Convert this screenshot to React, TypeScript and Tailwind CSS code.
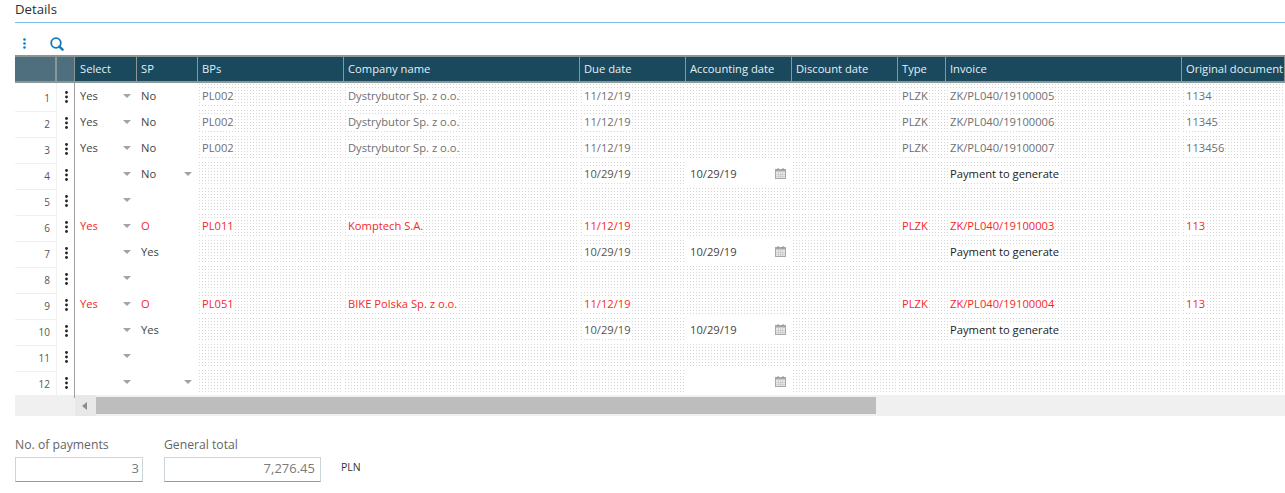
const GRID = 'grid grid-cols-[42px_18px_62px_61px_146px_236px_106px_106px_106px_48px_236px_103px]';
const DOTTED =
  'bg-[linear-gradient(to_right,transparent_1px,white_1px),linear-gradient(to_bottom,transparent_1px,white_1px)] bg-[size:3px_3px] bg-[#d6d6d6]';

const HEADERS = ['Select', 'SP', 'BPs', 'Company name', 'Due date', 'Accounting date', 'Discount date', 'Type', 'Invoice', 'Original document'];

interface Row {
  select?: string;
  sp?: string;
  spArrow?: boolean;
  bp?: string;
  company?: string;
  due?: string;
  acc?: string;
  accEdit?: boolean;
  type?: string;
  invoice?: string;
  doc?: string;
  red?: boolean;
  editable?: boolean;
}

const rows: Row[] = [
  { select: 'Yes', sp: 'No', bp: 'PL002', company: 'Dystrybutor Sp. z o.o.', due: '11/12/19', type: 'PLZK', invoice: 'ZK/PL040/19100005', doc: '1134' },
  { select: 'Yes', sp: 'No', bp: 'PL002', company: 'Dystrybutor Sp. z o.o.', due: '11/12/19', type: 'PLZK', invoice: 'ZK/PL040/19100006', doc: '11345' },
  { select: 'Yes', sp: 'No', bp: 'PL002', company: 'Dystrybutor Sp. z o.o.', due: '11/12/19', type: 'PLZK', invoice: 'ZK/PL040/19100007', doc: '113456' },
  { sp: 'No', spArrow: true, due: '10/29/19', acc: '10/29/19', accEdit: true, invoice: 'Payment to generate', editable: true },
  {},
  { select: 'Yes', sp: 'O', bp: 'PL011', company: 'Komptech S.A.', due: '11/12/19', type: 'PLZK', invoice: 'ZK/PL040/19100003', doc: '113', red: true },
  { sp: 'Yes', due: '10/29/19', acc: '10/29/19', accEdit: true, invoice: 'Payment to generate', editable: true },
  {},
  { select: 'Yes', sp: 'O', bp: 'PL051', company: 'BIKE Polska Sp. z o.o.', due: '11/12/19', type: 'PLZK', invoice: 'ZK/PL040/19100004', doc: '113', red: true },
  { sp: 'Yes', due: '10/29/19', acc: '10/29/19', accEdit: true, invoice: 'Payment to generate', editable: true },
  {},
  { spArrow: true, accEdit: true },
];

function Arrow() {
  return <span className="absolute right-[6px] top-[11px] w-0 h-0 border-x-[4px] border-x-transparent border-t-[4px] border-t-[#a3a3a3]" />;
}

function RowDots() {
  return (
    <svg width="3" height="12" viewBox="0 0 3 12" className="mb-[2px] ml-[1px] fill-[#222]">
      <circle cx="1.5" cy="1.5" r="1.4" />
      <circle cx="1.5" cy="6" r="1.4" />
      <circle cx="1.5" cy="10.5" r="1.4" />
    </svg>
  );
}

function CalendarIcon() {
  return (
    <svg width="11" height="11" viewBox="0 0 11 11" className="absolute right-[5px] top-[6px]">
      <rect x="0.5" y="1.5" width="10" height="9" fill="#e9e9e9" stroke="#a8a8a8" />
      <rect x="0.5" y="1.5" width="10" height="2" fill="#a8a8a8" />
      <path d="M3 0v2M8 0v2" stroke="#8f8f8f" />
      <path d="M3.5 4v6M5.5 4v6M7.5 4v6M1 6.5h9M1 8.5h9" stroke="#c4c4c4" strokeWidth="0.6" />
    </svg>
  );
}

function Cell({ text, color, dotted, children }: { text?: string; color: string; dotted?: boolean; children?: React.ReactNode }) {
  return (
    <div className={`relative mx-px my-px h-[24px] pl-[3px] leading-[24px] whitespace-nowrap ${color} ${dotted ? DOTTED : ''}`}>
      <span className={dotted && text ? 'bg-white' : ''}>{text}</span>
      {children}
    </div>
  );
}

function TableRow({ row, index }: { row: Row; index: number }) {
  const color = row.red ? 'text-[#f52828]' : 'text-[#6f6f6f]';
  const editColor = 'text-[#444]';
  const dueColor = row.red ? 'text-[#f52828]' : row.editable ? 'text-[#555]' : 'text-[#6f6f6f]';
  const invoiceColor = row.red ? 'text-[#f52828]' : row.editable ? 'text-[#222]' : 'text-[#6f6f6f]';
  return (
    <div className={`${GRID} h-[26px] text-[11.2px]`}>
      <div className="border-b border-r border-[#f0f0f0] text-right pr-[6px] pt-[2px] leading-[26px] text-[10px] text-[#555]">{index + 1}</div>
      <div className="flex items-center justify-center border-r border-r-[#a0a0a0]">
        <RowDots />
      </div>
      <div className={`relative pl-[5px] leading-[25px] ${row.red ? 'text-[#f52828]' : 'text-[#444]'}`}>
        {row.select}
        <Arrow />
      </div>
      <div className={`relative pl-[4px] leading-[25px] ${row.red ? 'text-[#f52828]' : 'text-[#444]'}`}>
        {row.sp}
        {row.spArrow && <Arrow />}
      </div>
      <Cell text={row.bp} color={color} dotted />
      <Cell text={row.company} color={color} dotted />
      <Cell text={row.due} color={dueColor} dotted />
      <Cell text={row.acc} color={editColor} dotted={!row.accEdit}>
        {row.accEdit && <CalendarIcon />}
      </Cell>
      <Cell color={color} dotted />
      <Cell text={row.type} color={color} dotted />
      <Cell text={row.invoice} color={invoiceColor} dotted />
      <Cell text={row.doc} color={color} dotted />
    </div>
  );
}

export default function App() {
  return (
    <div className="h-[493px] w-[1285px] overflow-hidden bg-white font-['Open_Sans',sans-serif]">
      <div className="pl-[15px]">
        <h2 className="h-[23px] border-b border-[#7ebde0] pt-[1px] text-[13.2px] leading-[16px] text-[#2d2d2d]">Details</h2>

        <div className="flex h-[32px] items-center pt-[8px]">
          <svg width="3" height="11" viewBox="0 0 3 11" className="ml-[8px] fill-[#1577b8]">
            <circle cx="1.5" cy="1.5" r="1.3" />
            <circle cx="1.5" cy="5.5" r="1.3" />
            <circle cx="1.5" cy="9.5" r="1.3" />
          </svg>
          <svg width="14" height="14" viewBox="0 0 14 14" fill="none" className="ml-[24px] mt-[1px]">
            <circle cx="6" cy="6" r="4.8" stroke="#1577b8" strokeWidth="1.8" />
            <path d="M9.4 9.6 12.6 12.6" stroke="#1577b8" strokeWidth="2.4" strokeLinecap="round" />
          </svg>
        </div>

        <div className={`${GRID} h-[28px] text-[11.2px] text-[#e4eff5]`}>
          <div className="bg-[#4f6f7e] border-y-2 border-r-2 border-[#8a9794]" />
          <div className="bg-[#4f6f7e] border-y-2 border-r border-[#8a9794]" />
          {HEADERS.map((h, i) => (
            <div key={h} className={`bg-[#1a495e] border-y-2 border-y-[#8a9794] border-r border-r-[#8a9794] ${i === 0 ? 'pl-[5px]' : 'pl-[4px]'} leading-[24px] whitespace-nowrap overflow-hidden`}>
              {h}
            </div>
          ))}
        </div>

        {rows.map((row, i) => (
          <TableRow key={i} row={row} index={i} />
        ))}

        <div className="flex h-[21px] bg-[#f0f0f0]">
          <div className="w-[60px]" />
          <div className="flex w-[21px] items-center justify-center bg-[#e8e8e8]">
            <span className="mr-[3px] h-0 w-0 border-y-[4px] border-r-[5px] border-y-transparent border-r-[#8d8d8d]" />
          </div>
          <div className="my-[2px] w-[780px] bg-[#bdbdbd]" />
        </div>

        <div className="mt-[20px] flex text-[12.2px] text-[#666]">
          <div className="w-[149px]">
            <div className="h-[17px] leading-[17px]">No. of payments</div>
            <div className="mt-[4px] h-[25px] w-[128px] border border-[#cbd5da] border-b-[#8d9ba2] pr-[3px] text-right leading-[20px] text-[13px] text-[#7a7a7a]">3</div>
          </div>
          <div>
            <div className="h-[17px] leading-[17px]">General total</div>
            <div className="mt-[4px] h-[25px] w-[157px] border border-[#cbd5da] border-b-[#8d9ba2] pr-[5px] text-right leading-[20px] text-[13px] text-[#7a7a7a]">7,276.45</div>
          </div>
          <div className="ml-[20px] mt-[23px] text-[10.5px] leading-[17px] text-[#333]">PLN</div>
        </div>
      </div>
    </div>
  );
}
